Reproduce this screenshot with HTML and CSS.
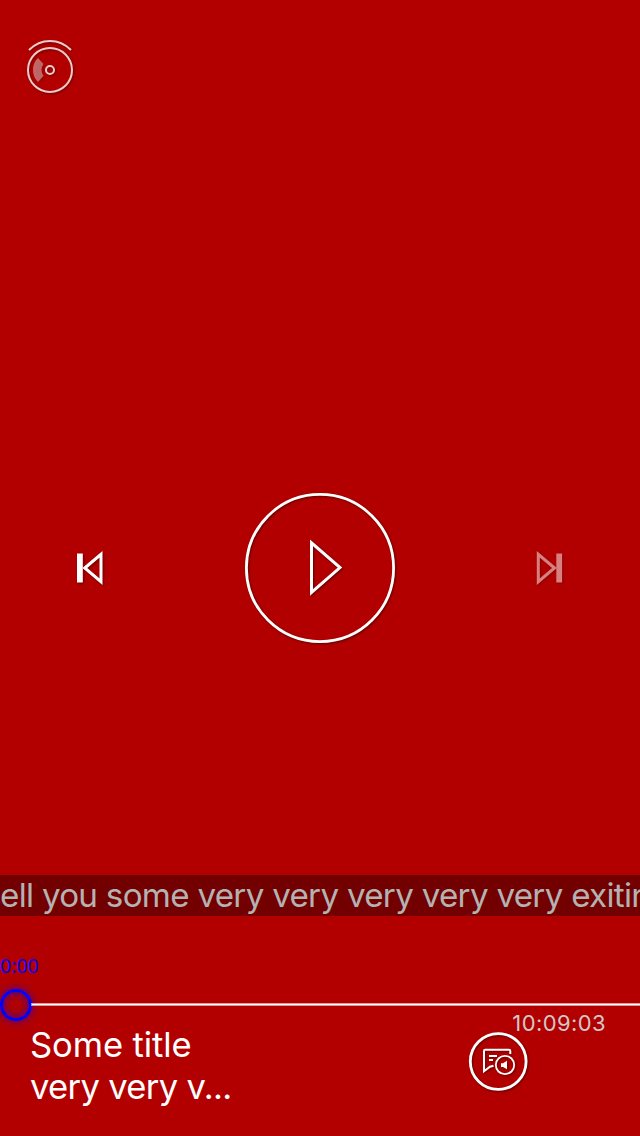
FILE: index.html
```html
<!DOCTYPE html>
<html lang="en">
<head>
<meta charset="utf-8">
<title>Player</title>
<link rel="stylesheet" href="styles.css">
</head>
<body>
<main class="player">
  <header class="top">
    <svg class="icon disc" width="60" height="64" viewBox="20 34 60 64">
      <g fill="none" stroke="#fff" stroke-opacity=".8" stroke-width="2">
        <circle cx="50" cy="70" r="22"/>
        <circle cx="50" cy="70" r="4"/>
        <path d="M29 50Q38 41 50 41T71 50"/>
      </g>
      <path fill="#fff" fill-opacity=".4" d="M38 58Q33 63 33 70T38 82L43.500 76Q41.500 73 41.500 70T43.500 64Z"/>
    </svg>
  </header>
  <section class="controls">
    <svg class="icon" width="40" height="46" viewBox="70 545 40 46">
      <path fill="#fff" d="M77 553.500h5.800v29H77z"/>
      <path fill="none" stroke="#fff" stroke-width="3" d="M84.800 568L101 554.300V581.700Z"/>
    </svg>
    <svg class="icon" width="160" height="160" viewBox="240 488 160 160">
      <circle cx="320" cy="568" r="73.600" fill="none" stroke="#fff" stroke-width="2.800"/>
      <path fill="none" stroke="#fff" stroke-width="3" d="M311.500 542.800V592.500L340 567.600Z"/>
    </svg>
    <svg class="icon next" width="40" height="46" viewBox="530 545 40 46">
      <path fill="#fff" d="M556.300 553.500h5.800v29h-5.800z"/>
      <path fill="none" stroke="#fff" stroke-width="3" d="M554.500 568L538.300 554.300V581.700Z"/>
    </svg>
  </section>
  <div class="ticker"><span class="ticker-text">ell you some very very very very very exiting</span></div>
  <div class="elapsed">0:00</div>
  <div class="timeline"><div class="knob"></div><div class="track"></div></div>
  <footer class="info">
    <div class="title"><div class="line1">Some title</div><div class="line2">very very v...</div></div>
    <div class="side">
      <div class="duration">10:09:03</div>
      <svg class="icon comment" width="66" height="66" viewBox="465 1028 66 66">
        <g fill="none" stroke="#fff">
          <circle cx="498.200" cy="1061.500" r="27.900" stroke-width="2.800"/>
          <path stroke-width="2" d="M510.300 1054V1051Q510.300 1049.800 509 1049.800H485.200Q484 1049.800 484 1051V1071.200L490 1066.700 493.500 1065.700"/>
          <path stroke-width="2" d="M489 1056H497M489 1060H493"/>
          <circle cx="505" cy="1065" r="9.200" stroke-width="1.800"/>
        </g>
        <path fill="#fff" d="M501 1063.200H503L507 1060.800V1069.200L503 1067H501Z"/>
      </svg>
    </div>
  </footer>
</main>
</body>
</html>
```
FILE: styles.css
```css
body { margin: 0; }
.player {
  display: flex;
  flex-direction: column;
  width: 640px;
  height: 1136px;
  overflow: hidden;
  background: #b20000;
  color: #fff;
  font-family: Inter, "Liberation Sans", sans-serif;
}
.icon {
  display: block;
  filter: drop-shadow(1px 1px 1px rgba(0, 0, 0, .45));
}
.top { height: 64px; padding: 34px 20px 0; }
.controls {
  display: flex;
  align-items: center;
  justify-content: space-between;
  height: 160px;
  margin-top: 390px;
  padding: 0 70px;
}
.next { opacity: .5; }
.ticker {
  height: 41px;
  margin-top: 227px;
  overflow: hidden;
  white-space: nowrap;
  background: #730000;
  color: #b3b3b3;
  font-size: 33.2px;
  line-height: 41px;
  letter-spacing: -.72px;
}
.elapsed {
  height: 24px;
  margin-top: 38px;
  color: #00f;
  font: 19.5px/24px "Noto Sans", sans-serif;
}
.timeline { display: flex; align-items: center; height: 32px; margin-top: 11px; }
.knob {
  box-sizing: border-box;
  width: 32px;
  height: 32px;
  border: 3px solid #00f;
  border-radius: 50%;
  box-shadow: 0 0 9px rgba(0, 0, 255, .65), inset 0 0 9px rgba(0, 0, 255, .65);
}
.track {
  flex: 1;
  height: 1px;
  margin-bottom: 1px;
  background: #fff;
  box-shadow: 0 0 0 1px rgba(255, 255, 255, .6);
}
.info { display: flex; justify-content: space-between; padding: 0 34px 0 30px; }
.title { padding-top: 2px; font-size: 34.6px; line-height: 42px; white-space: nowrap; }
.line1 { letter-spacing: -.1px; }
.line2 { letter-spacing: -.68px; }
.side { width: 141px; }
.duration {
  margin-top: -11px;
  color: #d0c8c8;
  font-size: 22px;
  line-height: 26px;
  letter-spacing: .4px;
  text-align: right;
}
.comment { margin-top: -8px; }
```
